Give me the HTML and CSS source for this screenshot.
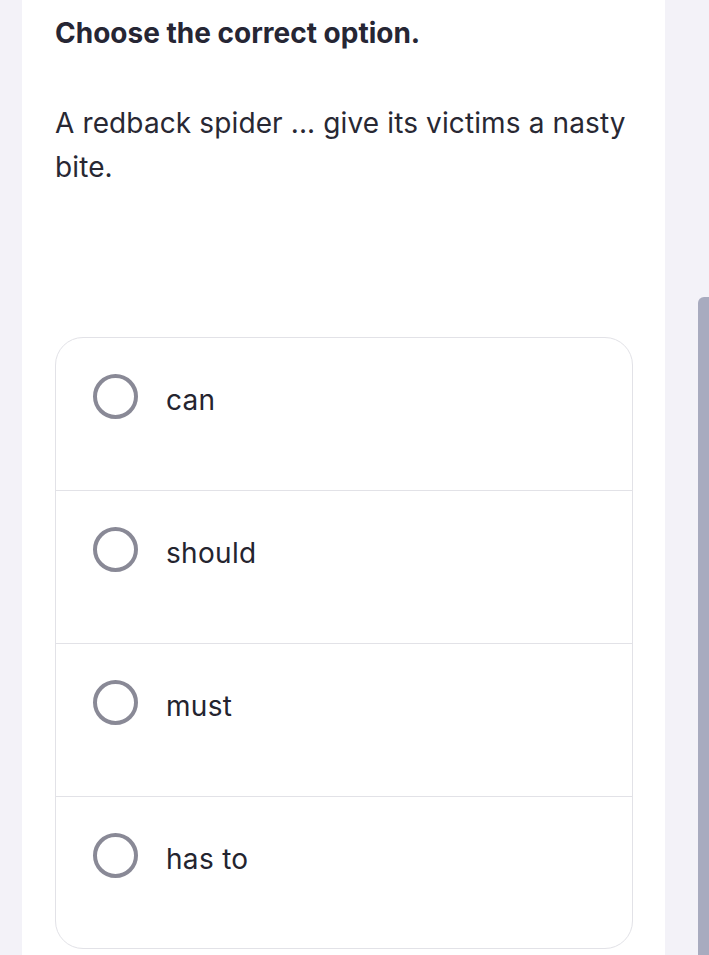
FILE: index.html
```html
<!DOCTYPE html>
<html lang="en">
<head>
<meta charset="utf-8">
<title>Quiz</title>
<link rel="stylesheet" href="styles.css">
</head>
<body>
<div class="page">
  <main class="card">
    <h1 class="prompt">Choose the correct option.</h1>
    <p class="question">A redback spider ... give its victims a nasty bite.</p>
    <ul class="options">
      <li class="option"><span class="radio"></span><span class="label">can</span></li>
      <li class="option"><span class="radio"></span><span class="label">should</span></li>
      <li class="option"><span class="radio"></span><span class="label">must</span></li>
      <li class="option"><span class="radio"></span><span class="label">has to</span></li>
    </ul>
  </main>
</div>
<div class="scroll-thumb"></div>
</body>
</html>
```
FILE: styles.css
```css
html, body {
  margin: 0;
  padding: 0;
  height: 100%;
  overflow: hidden;
}

body {
  background: #f3f2f8;
  font-family: Inter, "Noto Sans", sans-serif;
  color: #272733;
}

.page {
  display: flex;
  padding-left: 22px;
  height: 955px;
}

.card {
  width: 643px;
  box-sizing: border-box;
  background: #ffffff;
  padding: 12px 32px 0 33px;
  overflow: hidden;
}

.prompt {
  margin: 0;
  font-size: 28px;
  line-height: 42px;
  font-weight: 700;
  color: #262634;
}

.question {
  margin: 47px 0 0;
  font-size: 28px;
  line-height: 44px;
  letter-spacing: 0.12px;
  font-weight: 400;
  color: #282833;
}

.options {
  list-style: none;
  margin: 148px 0 0;
  padding: 0;
  border: 1px solid #e2e2e7;
  border-radius: 28px;
}

.option {
  display: flex;
  align-items: flex-start;
  gap: 28px;
  height: 153px;
  box-sizing: border-box;
  padding: 36px 37px 0;
  border-top: 1px solid #e2e2e7;
}

.option:first-child {
  border-top: none;
  height: 152px;
}

.option:last-child {
  height: 152px;
}

.radio {
  flex: none;
  width: 45px;
  height: 45px;
  box-sizing: border-box;
  border: 4px solid #898996;
  border-radius: 50%;
}

.label {
  margin-top: 4px;
  font-size: 28px;
  line-height: 44px;
  letter-spacing: 0.3px;
  color: #24242f;
}

.scroll-thumb {
  position: fixed;
  right: 0;
  top: 297px;
  width: 11px;
  height: 700px;
  background: #a8abbf;
  border-radius: 6px 0 0 0;
}
```
